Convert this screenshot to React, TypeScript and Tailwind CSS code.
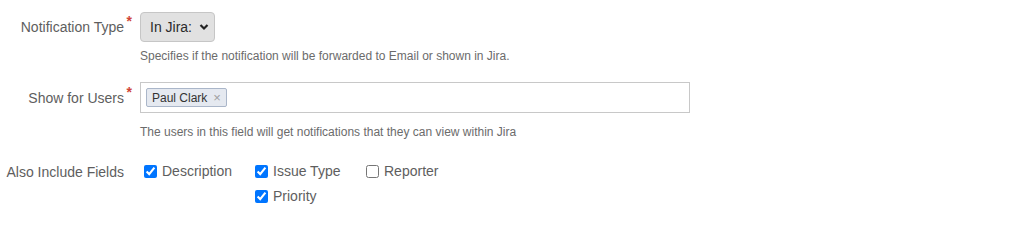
import React from "react";

const Required: React.FC = () => (
  <span className="absolute -right-[8px] top-[-6px] text-[14px] font-bold text-[#d04437]">*</span>
);

const FieldLabel: React.FC<{ text: string; required?: boolean; h: string }> = ({ text, required, h }) => (
  <div className={`w-[124px] shrink-0 flex items-center justify-end ${h}`}>
    <label className="relative text-[14px] text-[#5e5e5e] leading-none">
      {text}
      {required && <Required />}
    </label>
  </div>
);

const Check: React.FC<{ label: string; checked?: boolean; className?: string }> = ({ label, checked, className }) => (
  <label className={`flex items-center h-[25px] text-[14px] text-[#5e5e5e] ${className ?? ""}`}>
    <input type="checkbox" defaultChecked={checked} className="w-[13px] h-[13px] ml-[4px] mr-[5px] my-0" />
    {label}
  </label>
);

export default function App() {
  return (
    <div className="w-[1013px] h-[216px] bg-white pt-[12px] font-['Liberation_Sans',Arial,sans-serif]">
      {/* NOTIFICATION TYPE */}
      <div className="flex items-start gap-4">
        <FieldLabel text="Notification Type" required h="h-[30px]" />
        <div className="flex flex-col">
          <div className="relative w-[75px] h-[30px]">
            <select className="appearance-none w-full h-full rounded-[4px] border border-[#c6c6c6] bg-[#e1e1e1] pl-[9px] text-[14px] text-[#2b2b2b] outline-none">
              <option>In Jira:</option>
              <option>Email</option>
            </select>
            <svg className="pointer-events-none absolute right-[6px] top-[11px]" width="10" height="8" viewBox="0 0 10 8">
              <path d="M1.5 2 L5 5.5 L8.5 2" fill="none" stroke="#222" strokeWidth="2.2" />
            </svg>
          </div>
          <p className="mt-[7px] text-[12px] leading-[15px] text-[#6b6b6b]">
            Specifies if the notification will be forwarded to Email or shown in Jira.
          </p>
        </div>
      </div>

      {/* SHOW FOR USERS */}
      <div className="flex items-start gap-4 mt-[18px]">
        <FieldLabel text="Show for Users" required h="h-[31px]" />
        <div className="flex flex-col">
          <div className="w-[550px] h-[31px] border border-[#c8c8c8] bg-white flex items-center pl-[5px]">
            <span className="flex items-center h-[19px] px-[5px] border border-[#aab6c9] bg-[#e5e9f0] rounded-[2px] text-[12px] text-[#333]">
              Paul Clark
              <span className="ml-[6px] text-[13px] text-[#a0a0a0]">×</span>
            </span>
          </div>
          <p className="mt-[12px] text-[12px] leading-[15px] text-[#6b6b6b]">
            The users in this field will get notifications that they can view within Jira
          </p>
        </div>
      </div>

      {/* ALSO INCLUDE FIELDS */}
      <div className="flex items-start gap-4 mt-[19px]">
        <FieldLabel text="Also Include Fields" h="h-[25px]" />
        <div className="grid grid-cols-[111px_111px_111px]">
          <Check label="Description" checked />
          <Check label="Issue Type" checked />
          <Check label="Reporter" />
          <Check label="Priority" checked className="col-start-2" />
        </div>
      </div>
    </div>
  );
}
